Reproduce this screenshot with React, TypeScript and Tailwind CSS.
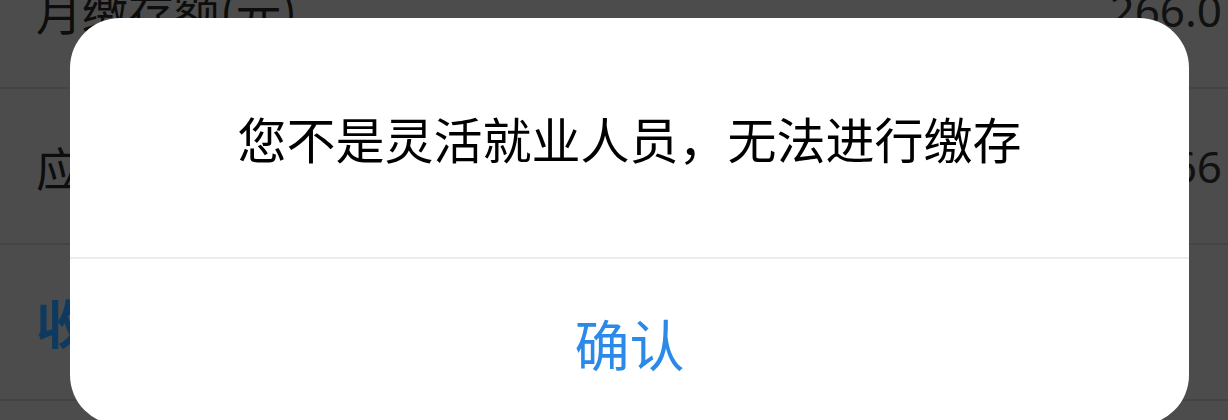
import React from "react";

const cjk = { fontFamily: '"Noto Sans CJK SC", "Noto Sans", sans-serif' };
const num = { fontFamily: '"Noto Sans", "Noto Sans CJK SC", sans-serif' };

type Row = { label: string; value?: string; heading?: boolean };

const rows: Row[] = [
  { label: "月缴存额(元)", value: "266.0" },
  { label: "应缴金额(元)", value: "266" },
  { label: "收款账户信息", heading: true },
  { label: "账户名称" },
];

export default function App() {
  return (
    <div className="relative h-[420px] w-[1228px] overflow-hidden bg-[#4c4c4c]">
      {/* detail rows behind the dimmed overlay */}
      <div className="-mt-[67px] flex flex-col">
        {rows.map((r) => (
          <div
            key={r.label}
            className="flex h-[156px] shrink-0 items-center justify-between border-b-2 border-[#444444] pl-[36px] pr-[6px]"
          >
            <span
              style={cjk}
              className={
                r.heading
                  ? "text-[52px] font-bold leading-none text-[#0f3a5f]"
                  : "text-[46px] leading-none text-[#0d0d0d]"
              }
            >
              {r.label}
            </span>
            {r.value && (
              <span style={num} className="text-[44px] leading-none text-[#111111]">
                {r.value}
              </span>
            )}
          </div>
        ))}
      </div>

      {/* alert dialog */}
      <div className="absolute left-[70px] top-[18px] flex h-[407px] w-[1119px] flex-col overflow-hidden rounded-[50px] bg-white">
        <div className="flex h-[239px] shrink-0 items-center justify-center">
          <p style={cjk} className="text-[49px] leading-none text-black">
            您不是灵活就业人员，无法进行缴存
          </p>
        </div>
        <div className="h-[2px] shrink-0 bg-[#ececec]" />
        <button
          type="button"
          style={cjk}
          className="flex flex-1 items-center justify-center text-[55px] leading-none text-[#2b8ae8]"
        >
          确认
        </button>
      </div>
    </div>
  );
}
